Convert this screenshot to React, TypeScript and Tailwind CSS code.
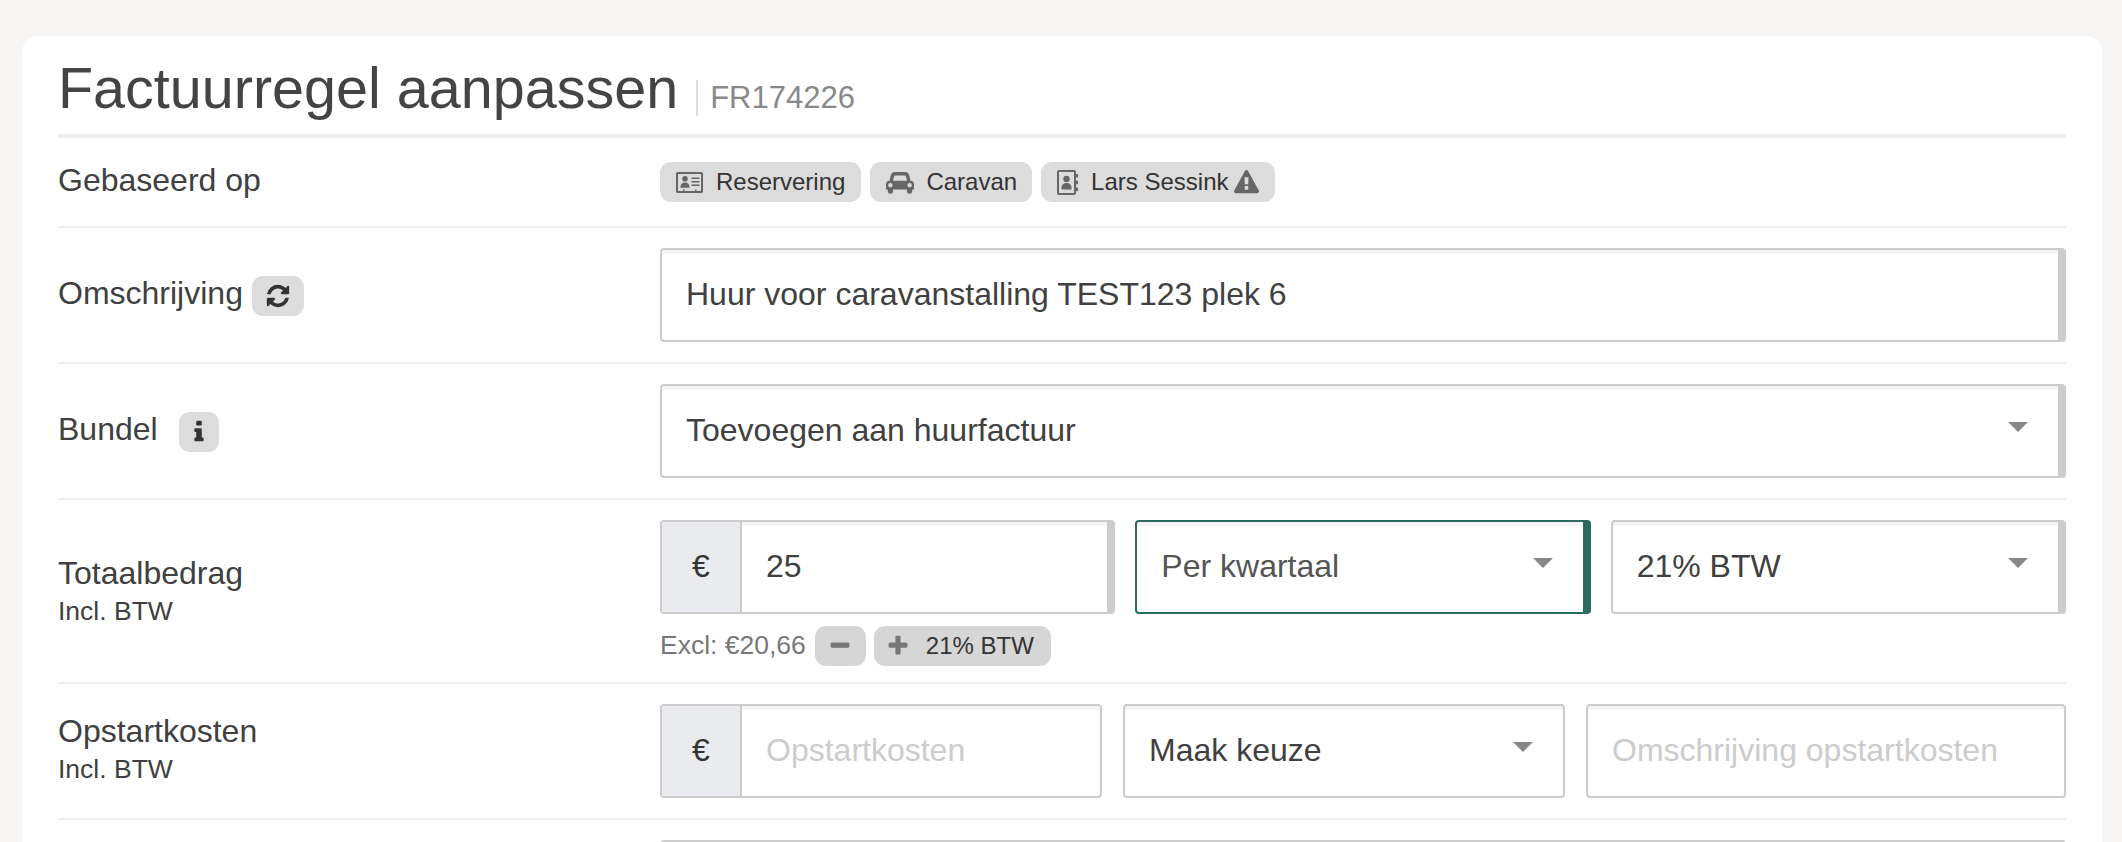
import React from "react";

const Fa = ({ d, vb = "0 0 1792 1792", className }: { d: string; vb?: string; className: string }) => (
  <svg viewBox={vb} className={className} fill="currentColor"><path d={d} /></svg>
);

const CAR = "M480 1088q0-66-47-113t-113-47-113 47-47 113 47 113 113 47 113-47 47-113zm36-320h1016l-89-357q-2-8-14-17.500t-21-9.500h-768q-9 0-21 9.500t-14 17.500zm1372 320q0-66-47-113t-113-47-113 47-47 113 47 113 113 47 113-47 47-113zm160-96v384q0 14-9 23t-23 9h-96v128q0 80-56 136t-136 56-136-56-56-136v-128h-1024v128q0 80-56 136t-136 56-136-56-56-136v-128h-96q-14 0-23-9t-9-23v-384q0-93 65.500-158.500t158.500-65.500h28l105-419q23-94 104-157.500t179-63.500h768q98 0 179 63.500t104 157.500l105 419h28q93 0 158.500 65.500t65.500 158.500z";
const REFRESH = "M1639 1056q0 5-1 7-64 268-268 434.500t-478 166.500q-146 0-282.500-55t-243.500-157l-129 129q-19 19-45 19t-45-19-19-45v-448q0-26 19-45t45-19h448q26 0 45 19t19 45-19 45l-137 137q71 66 161 102t187 36q134 0 250-65t186-179q11-17 53-117 8-23 30-23h192q13 0 22.500 9.500t9.500 22.500zm25-800v448q0 26-19 45t-45 19h-448q-26 0-45-19t-19-45 19-45l138-138q-148-137-349-137-134 0-250 65t-186 179q-11 17-53 117-8 23-30 23h-199q-13 0-22.500-9.500t-9.500-22.500v-7q65-268 270-434.500t480-166.500q146 0 284 55.500t245 156.500l130-129q19-19 45-19t45 19 19 45z";
const WARN = "M1024 1375v-190q0-14-9.500-23.500t-22.500-9.500h-192q-13 0-22.500 9.500t-9.500 23.500v190q0 14 9.500 23.500t22.500 9.500h192q13 0 22.500-9.500t9.500-23.500zm-2-374l18-459q0-12-10-19-13-11-24-11h-220q-11 0-24 11-10 7-10 21l17 457q0 10 10 16.500t24 6.500h185q14 0 23.500-6.500t10.500-16.500zm-14-934l768 1408q35 63-2 126-17 29-46.500 46t-63.500 17h-1536q-34 0-63.500-17t-46.500-46q-37-63-2-126l768-1408q17-31 47-49t65-18 65 18 47 49z";
const INFO = "M1216 1344v128q0 26-19 45t-45 19h-512q-26 0-45-19t-19-45v-128q0-26 19-45t45-19h64v-384h-64q-26 0-45-19t-19-45v-128q0-26 19-45t45-19h384q26 0 45 19t19 45v576h64q26 0 45 19t19 45zm-128-1152v192q0 26-19 45t-45 19h-256q-26 0-45-19t-19-45v-192q0-26 19-45t45-19h256q26 0 45 19t19 45z";
const PLUS = "M1600 736v192q0 40-28 68t-68 28h-416v416q0 40-28 68t-68 28h-192q-40 0-68-28t-28-68v-416h-416q-40 0-68-28t-28-68v-192q0-40 28-68t68-28h416v-416q0-40 28-68t68-28h192q40 0 68 28t28 68v416h416q40 0 68 28t28 68z";
const MINUS = "M1600 736v192q0 40-28 68t-68 28h-1216q-40 0-68-28t-28-68v-192q0-40 28-68t68-28h1216q40 0 68 28t28 68z";

const IdCard = () => (
  <svg viewBox="0 0 27 21" className="w-[27px] h-[21px]" fill="#666">
    <path fillRule="evenodd" d="M1.500 0h24a1.500 1.500 0 0 1 1.500 1.500v18a1.500 1.500 0 0 1-1.500 1.500h-24a1.500 1.500 0 0 1-1.500-1.500v-18a1.500 1.500 0 0 1 1.500-1.500zm.5 2v17h23V2H2z" />
    <circle cx="9" cy="6.800" r="2.800" />
    <path d="M4.500 15c0-3 1.800-4.500 4.500-4.500s4.500 1.500 4.500 4.500v.8h-9zM15.500 5.500h8v1.600h-8zM15.500 9h8v1.600h-8zM15.500 12.500h8v1.600h-8zM7 17.500h1.500v2H7zM19 17.500h1.500v2H19z" />
  </svg>
);

const AddressBook = () => (
  <svg viewBox="0 0 21 25" className="w-[21px] h-[25px]" fill="#666">
    <path fillRule="evenodd" d="M2 0h15a2 2 0 0 1 2 2v21a2 2 0 0 1-2 2H2a2 2 0 0 1-2-2V2a2 2 0 0 1 2-2zm0 2v21h15V2H2z" />
    <circle cx="9.500" cy="9" r="3.200" />
    <path d="M4.500 18c0-3.500 2-5 5-5s5 1.500 5 5v1.500h-10zM19 4h2v3.500h-2zM19 10.700h2v3.500h-2zM19 17.500h2V21h-2z" />
  </svg>
);

const Caret = () => (
  <div className="ml-auto mr-[18px] mb-[6px] w-0 h-0 border-l-[10px] border-r-[10px] border-t-[10px] border-l-transparent border-r-transparent border-t-[#888]" />
);

const Pill = ({ children, className = "" }: { children: React.ReactNode; className?: string }) => (
  <span className={`inline-flex items-center h-[40px] rounded-[11px] bg-[#dcdcdc] text-[24px] text-[#333] ${className}`}>{children}</span>
);

const Row = ({ label, sub, extra, children, className = "", bodyClass = "" }: { label: string; sub?: boolean; extra?: React.ReactNode; children: React.ReactNode; className?: string; bodyClass?: string }) => (
  <div className={`flex border-b-2 border-[#eeeeee] ${className}`}>
    <div className="w-[602px] shrink-0 flex items-center pb-[4px]">
      <div className="flex flex-col">
        <div className="flex items-center text-[32px] leading-[40px] text-[#404040]">{label}{extra}</div>
        {sub && <div className="text-[26.500px] leading-[36px] text-[#404040]">Incl. BTW</div>}
      </div>
    </div>
    <div className={`flex-1 min-w-0 ${bodyClass}`}>{children}</div>
  </div>
);

const Field = ({ children, thick, className = "" }: { children: React.ReactNode; thick?: boolean; className?: string }) => (
  <div className={`flex items-center h-[94px] rounded-[4px] border-2 border-[#cccccc] shadow-[inset_0_4px_0_#f5f5f5] text-[32px] text-[#404040] pl-[24px] pr-[12px] pb-[2px] bg-white ${thick ? "border-r-[8px]" : ""} ${className}`}>{children}</div>
);

const Money = ({ thick, value, placeholder, className = "" }: { thick?: boolean; value?: string; placeholder?: string; className?: string }) => (
  <div className={`flex h-[94px] rounded-[4px] border-2 border-[#cccccc] overflow-hidden ${thick ? "border-r-[8px]" : ""} ${className}`}>
    <div className="w-[80px] flex items-center justify-center pb-[2px] bg-[#e9ebee] border-r-2 border-[#cccccc] text-[32px] text-[#333]">€</div>
    <div className={`flex-1 flex items-center pl-[24px] pb-[2px] shadow-[inset_0_4px_0_#f5f5f5] text-[32px] ${value ? "text-[#404040]" : "text-[#cccccc]"}`}>{value ?? placeholder}</div>
  </div>
);

export default function App() {
  return (
    <div className="h-[842px] overflow-hidden bg-[#f7f6f4] pt-[36px] pl-[22px] pr-[20px] font-['Liberation_Sans',sans-serif]">
      <div className="bg-white rounded-t-[16px] px-[36px] h-[806px]">
        <div className="flex items-end h-[102px] pb-[14px] border-b-[4px] border-[#eeeeee]">
          <h1 className="text-[57.500px] leading-[64px] text-[#444444]">Factuurregel aanpassen</h1>
          <span className="ml-[18px] mb-[4px] pl-[12px] border-l-2 border-[#dddddd] text-[31px] leading-[36px] text-[#888888]">FR174226</span>
        </div>

        <Row label="Gebaseerd op" className="h-[90px]" bodyClass="flex items-center">
          <div className="flex gap-[9px]">
            <Pill className="pl-[16px] pr-[16px]"><IdCard /><span className="ml-[13px]">Reservering</span></Pill>
            <Pill className="pl-[16px] pr-[15px]"><Fa d={CAR} vb="0 0 2048 1792" className="w-[28px] h-[25px] text-[#666]" /><span className="ml-[12px]">Caravan</span></Pill>
            <Pill className="pl-[16px] pr-[16px]"><AddressBook /><span className="ml-[13px]">Lars Sessink</span><Fa d={WARN} className="ml-[5px] w-[25px] h-[25px] text-[#666]" /></Pill>
          </div>
        </Row>

        <Row label="Omschrijving" extra={<span className="ml-[9px] mt-[5px] flex items-center justify-center w-[52px] h-[40px] rounded-[11px] bg-[#dcdcdc]"><Fa d={REFRESH} className="w-[26px] h-[26px] text-[#333]" /></span>} className="pt-[20px] pb-[20px]">
          <Field thick>Huur voor caravanstalling TEST123 plek 6</Field>
        </Row>

        <Row label="Bundel" extra={<span className="ml-[21px] mt-[5px] flex items-center justify-center w-[40px] h-[40px] rounded-[11px] bg-[#dcdcdc]"><Fa d={INFO} className="w-[26px] h-[26px] text-[#333]" /></span>} className="pt-[20px] pb-[20px]">
          <Field thick><span>Toevoegen aan huurfactuur</span><Caret /></Field>
        </Row>

        <Row label="Totaalbedrag" sub className="pt-[20px] pb-[16px]">
          <div className="grid grid-cols-3 gap-[20px]">
            <Money thick value="25" />
            <Field thick className="!border-[#2b6b60] shadow-[0_2px_8px_rgba(0,0,0,0.12)] !text-[#555]"><span>Per kwartaal</span><Caret /></Field>
            <Field thick><span>21% BTW</span><Caret /></Field>
          </div>
          <div className="flex items-center mt-[12px]">
            <span className="text-[#777] text-[26.500px]">Excl: €20,66</span>
            <Pill className="ml-[9px] w-[51px] justify-center !bg-[#d6d6d6]"><Fa d={MINUS} className="w-[24px] h-[24px] text-[#777]" /></Pill>
            <Pill className="ml-[8px] pl-[12px] pr-[17px] !bg-[#d6d6d6]"><Fa d={PLUS} className="w-[24px] h-[24px] text-[#777]" /><span className="ml-[16px]">21% BTW</span></Pill>
          </div>
        </Row>

        <Row label="Opstartkosten" sub className="pt-[20px] pb-[20px]">
          <div className="flex gap-[21px]">
            <Money placeholder="Opstartkosten" className="w-[442px]" />
            <Field className="w-[442px]"><span>Maak keuze</span><Caret /></Field>
            <Field className="flex-1 !text-[#cccccc]">Omschrijving opstartkosten</Field>
          </div>
        </Row>

        <div className="pt-[20px] flex">
          <div className="w-[602px] shrink-0" />
          <div className="flex-1 h-[94px] rounded-[4px] border-2 border-[#cccccc] shadow-[inset_0_4px_0_#f5f5f5]" />
        </div>
      </div>
    </div>
  );
}
